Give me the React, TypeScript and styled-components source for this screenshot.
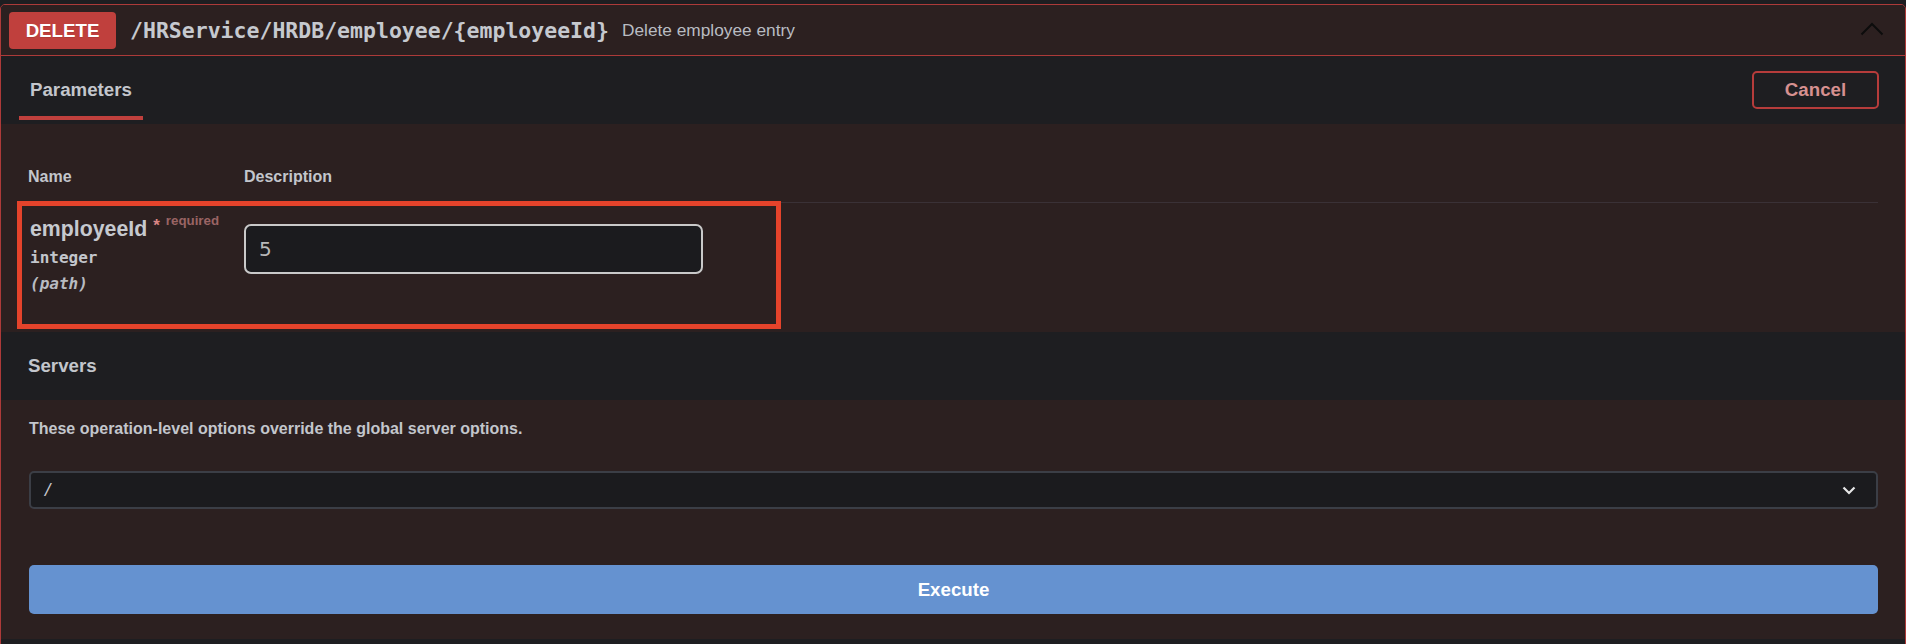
import React from "react";
import styled, { createGlobalStyle } from "styled-components";

const GlobalStyle = createGlobalStyle`
  html, body {
    margin: 0;
    padding: 0;
    background: #1e1e21;
    font-family: "Liberation Sans", Arial, sans-serif;
  }
  * { box-sizing: border-box; }
`;

const SANS = `"Liberation Sans", Arial, sans-serif`;
const MONO = `"DejaVu Sans Mono", "Liberation Mono", monospace`;

const Page = styled.div`
  padding-top: 4px;
  width: 1906px;
`;

const OpBlock = styled.div`
  border: 1px solid #ad3a39;
  border-radius: 5px;
  background: #2c2020;
  overflow: hidden;
`;

const Summary = styled.div`
  display: flex;
  align-items: center;
  padding: 7px 8px 6px 8px;
  border-bottom: 1px solid #ad3a39;
  background: #2c2020;
`;

const Method = styled.span`
  display: inline-flex;
  align-items: center;
  justify-content: center;
  width: 107px;
  height: 37px;
  border-radius: 4px;
  background: #c0403d;
  color: #ffffff;
  font-family: ${SANS};
  font-weight: 700;
  font-size: 18.7px;
  text-shadow: 0 1px 0 rgba(0, 0, 0, 0.1);
`;

const Path = styled.span`
  padding: 0 13px 0 14px;
  font-family: ${MONO};
  font-weight: 700;
  font-size: 21.5px;
  color: #c6c9cf;
`;

const SummaryDesc = styled.span`
  flex: 1;
  font-family: ${SANS};
  font-size: 17.3px;
  color: #b9bcc2;
`;

const ArrowBox = styled.span`
  display: flex;
  align-items: center;
  justify-content: center;
  width: 27px;
  height: 27px;
  margin-right: 12px;
  margin-top: -3px;
`;

const SectionHeader = styled.div`
  display: flex;
  align-items: center;
  justify-content: space-between;
  height: 68px;
  padding: 0 26px 0 27px;
  background: #1e1e21;
`;

const SectionTitle = styled.h4`
  margin: 0;
  font-family: ${SANS};
  font-weight: 700;
  font-size: 18.7px;
  line-height: 22px;
  color: #c3c6cc;
`;

const TabTitle = styled.h4`
  position: relative;
  margin: 0 0 0 2px;
  font-family: ${SANS};
  font-weight: 700;
  font-size: 18.7px;
  line-height: 22px;
  color: #c3c6cc;

  &::after {
    content: "";
    position: absolute;
    left: 50%;
    bottom: -19px;
    width: 124px;
    height: 4px;
    transform: translateX(-50%);
    background: #c0403d;
  }
`;

const CancelButton = styled.button`
  width: 127px;
  height: 38px;
  border: 2px solid #b63c3b;
  border-radius: 5px;
  background: transparent;
  color: #d69090;
  font-family: ${SANS};
  font-weight: 700;
  font-size: 18.7px;
  cursor: pointer;
`;

const TableContainer = styled.div`
  padding: 27px 27px 27px 27px;
  background: #2c2020;
`;

const HeadRow = styled.div`
  display: flex;
  border-bottom: 1px solid #3a3136;
`;

const HeadCell = styled.div<{ $width?: number }>`
  ${(p) => (p.$width ? `width: ${p.$width}px; flex: none;` : "flex: 1;")}
  padding: 17px 0 16px;
  font-family: ${SANS};
  font-weight: 700;
  font-size: 16px;
  line-height: 18px;
  color: #c3c6cc;
`;

const ParamRow = styled.div`
  position: relative;
  display: flex;
  padding: 13px 0 11px;
`;

const Highlight = styled.div`
  position: absolute;
  left: -11px;
  top: -2px;
  width: 764px;
  height: 128px;
  border: 5px solid #e5432b;
  pointer-events: none;
`;

const NameCell = styled.div`
  width: 216px;
  flex: none;
  padding-left: 2px;
`;

const ParamName = styled.div`
  display: flex;
  align-items: flex-start;
  font-family: ${SANS};
  font-weight: 700;
  font-size: 21.3px;
  line-height: 26px;
  color: #c6c9cf;
`;

const RequiredStar = styled.span`
  margin-left: 6px;
  margin-top: 0px;
  font-size: 17px;
  line-height: 20px;
  color: #d98584;
`;

const RequiredLabel = styled.span`
  margin-left: 6px;
  margin-top: -4px;
  font-size: 13.3px;
  line-height: 18px;
  color: #9a6464;
`;

const ParamType = styled.div`
  padding: 6px 0;
  font-family: ${MONO};
  font-weight: 700;
  font-size: 16px;
  line-height: 20px;
  color: #c3c6cc;
`;

const ParamIn = styled.div`
  font-family: ${MONO};
  font-style: italic;
  font-weight: 700;
  font-size: 16px;
  line-height: 20px;
  color: #b8bbc1;
`;

const DescCell = styled.div`
  flex: 1;
`;

const ValueInput = styled.input`
  display: block;
  margin-top: 8px;
  width: 459px;
  height: 50px;
  padding: 0 13px;
  border: 2px solid #c9c9c9;
  border-radius: 7px;
  background: #1b1b1e;
  color: #b9b9b9;
  font-family: "DejaVu Sans", ${SANS};
  font-size: 20px;
  outline: none;
`;

const ServersBody = styled.div`
  padding: 19px 27px 25px 28px;
  background: #2c2020;
`;

const ServersNote = styled.div`
  font-family: ${SANS};
  font-weight: 700;
  font-size: 16px;
  line-height: 20px;
  color: #c3c6cc;
`;

const SelectBox = styled.div`
  display: flex;
  align-items: center;
  justify-content: space-between;
  margin-top: 32px;
  height: 38px;
  padding: 0 20px 0 14px;
  border: 2px solid #3b3e46;
  border-radius: 5px;
  background: #1b1b1e;
  color: #c3c6cc;
  font-family: ${SANS};
  font-style: italic;
  font-size: 19px;
`;

const ExecuteButton = styled.button`
  display: block;
  width: 100%;
  margin-top: 56px;
  height: 49px;
  border: none;
  border-radius: 5px;
  background: #6592d0;
  color: #ffffff;
  font-family: ${SANS};
  font-weight: 700;
  font-size: 18.7px;
  cursor: pointer;
`;

export default function App() {
  return (
    <Page>
      <GlobalStyle />
      <OpBlock>
        <Summary>
          <Method>DELETE</Method>
          <Path>/HRService/HRDB/employee/{"{employeeId}"}</Path>
          <SummaryDesc>Delete employee entry</SummaryDesc>
          <ArrowBox>
            <svg width="24" height="14" viewBox="0 0 24 14">
              <path d="M1.5 12.5 L12 2 L22.5 12.5" fill="none" stroke="#0c0c0c" strokeWidth="2" />
            </svg>
          </ArrowBox>
        </Summary>

        <SectionHeader>
          <TabTitle>Parameters</TabTitle>
          <CancelButton>Cancel</CancelButton>
        </SectionHeader>

        <TableContainer>
          <HeadRow>
            <HeadCell $width={216}>Name</HeadCell>
            <HeadCell>Description</HeadCell>
          </HeadRow>
          <ParamRow>
            <Highlight />
            <NameCell>
              <ParamName>
                employeeId
                <RequiredStar>*</RequiredStar>
                <RequiredLabel>required</RequiredLabel>
              </ParamName>
              <ParamType>integer</ParamType>
              <ParamIn>(path)</ParamIn>
            </NameCell>
            <DescCell>
              <ValueInput type="text" defaultValue="5" />
            </DescCell>
          </ParamRow>
        </TableContainer>

        <SectionHeader>
          <SectionTitle>Servers</SectionTitle>
        </SectionHeader>

        <ServersBody>
          <ServersNote>These operation-level options override the global server options.</ServersNote>
          <SelectBox>
            <span>/</span>
            <svg width="14" height="9" viewBox="0 0 14 9">
              <path d="M1.5 1.5 L7 7 L12.5 1.5" fill="none" stroke="#e6e6e6" strokeWidth="2.2" />
            </svg>
          </SelectBox>
          <ExecuteButton>Execute</ExecuteButton>
        </ServersBody>

        <SectionHeader />
      </OpBlock>
    </Page>
  );
}
